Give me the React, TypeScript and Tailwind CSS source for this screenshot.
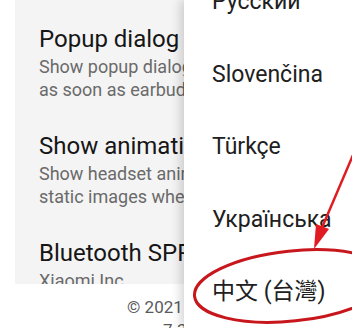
import React from 'react';

interface Setting {
  title: string;
  lines: string[];
}

const settings: Setting[] = [
  { title: 'Popup dialog', lines: ['Show popup dialog', 'as soon as earbuds are opened'] },
  { title: 'Show animations', lines: ['Show headset animations', 'static images when'] },
  { title: 'Bluetooth SPP', lines: ['Xiaomi Inc.'] },
];

const languages = ['Русский', 'Slovenčina', 'Türkçe', 'Українська', '中文 (台灣)'];

const font = { fontFamily: 'Roboto, "Noto Sans CJK TC", sans-serif' };

export default function App() {
  return (
    <div className="relative w-[352px] h-[328px] overflow-hidden bg-white" style={font}>
      {/* settings list */}
      <div className="ml-[15px] h-[284px] overflow-hidden bg-[#f4f4f4] pt-[25px] pl-[24px] flex flex-col gap-[31px]">
        {settings.map((s) => (
          <div key={s.title} className="whitespace-nowrap">
            <div className="text-[24px] leading-[28px] text-[#161616]">{s.title}</div>
            <div className="mt-[2px] text-[18px] leading-[23px] text-[#6a6a6a]">
              {s.lines.map((l) => (
                <div key={l}>{l}</div>
              ))}
            </div>
          </div>
        ))}
      </div>

      {/* footer */}
      <div className="pt-[13px] text-[17px] leading-[21px] text-[#5a5a5a] whitespace-nowrap">
        <div className="ml-[127px]">© 2021 Kavan Prahara</div>
        <div className="ml-[163px] mt-[2px]">7.33.0</div>
      </div>

      {/* language menu */}
      <div className="absolute top-0 right-0 w-[168px] h-[328px] bg-white shadow-[-3px_0_10px_rgba(0,0,0,0.18)]">
        <div className="mt-[-34px] pl-[28px]">
          {languages.map((lang) => (
            <div key={lang} className="h-[72.5px] leading-[72.5px] text-[23px] text-[#202020] whitespace-nowrap">
              {lang}
            </div>
          ))}
        </div>
      </div>

      {/* red annotation */}
      <svg className="absolute inset-0 pointer-events-none" width="352" height="328" viewBox="0 0 352 328">
        <ellipse
          cx="292"
          cy="286"
          rx="98"
          ry="35"
          transform="rotate(-6 292 286)"
          fill="none"
          stroke="#c8161d"
          strokeWidth="3"
        />
        <line x1="356" y1="148" x2="321" y2="230" stroke="#e01b22" strokeWidth="2.5" />
        <polygon points="314,249 316,224 329,229" fill="#e01b22" />
      </svg>
    </div>
  );
}
